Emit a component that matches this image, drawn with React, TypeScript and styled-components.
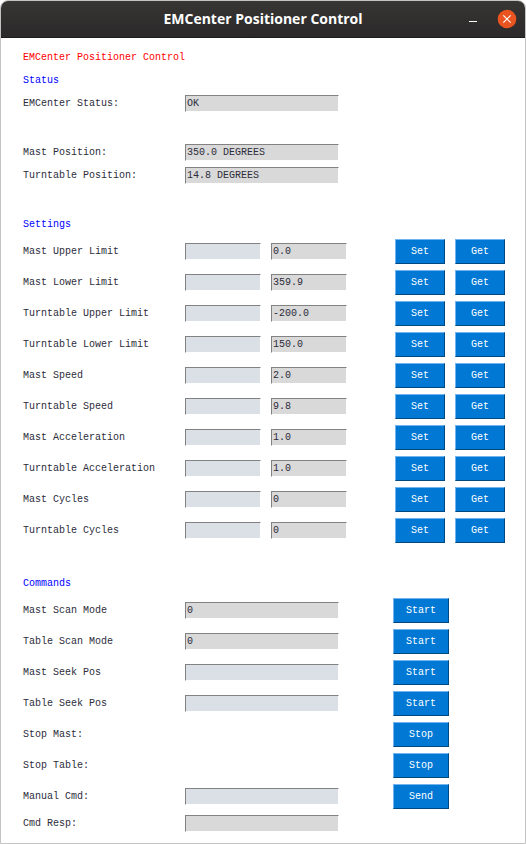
import React, { useId } from "react";
import styled, { createGlobalStyle } from "styled-components";

const GlobalStyle = createGlobalStyle`
  * { box-sizing: border-box; }
  body {
    margin: 0;
    background: #ffffff;
    font-family: "Liberation Mono", monospace;
    font-size: 10px;
    line-height: 13px;
    color: #2c2c3a;
  }
`;

const Window = styled.main`
  min-height: 100vh;
  border: 1px solid #c3c3c3;
  border-radius: 8px 8px 0 0;
  overflow: hidden;
  background: #ffffff;
`;

const TitleBar = styled.header`
  display: grid;
  grid-template-columns: 1fr auto 1fr;
  align-items: center;
  height: 37px;
  padding: 0 8px;
  background: linear-gradient(#373633, #2b292a);
  border-bottom: 1px solid #1d1c1c;
`;

const WindowTitle = styled.h1`
  grid-column: 2;
  margin: 0;
  font-family: "Open Sans", sans-serif;
  font-size: 14px;
  line-height: 20px;
  font-weight: 700;
  color: #ffffff;
`;

const WindowControls = styled.div`
  display: flex;
  justify-content: flex-end;
  gap: 14px;
`;

const WindowButton = styled.button<{ $close?: boolean }>`
  display: block;
  width: 20px;
  height: 20px;
  padding: 0;
  border: 0;
  border-radius: 50%;
  background: transparent;

  circle { fill: ${(p) => (p.$close ? "#e95420" : "none")}; }
`;

const Content = styled.div`
  padding: 8px 20px 8px 22px;
`;

const Section = styled.section<{ $spaced?: boolean }>`
  padding-bottom: ${(p) => (p.$spaced ? 26 : 0)}px;
`;

const Heading = styled.h2<{ $color: string }>`
  margin: 0;
  font-size: 10px;
  font-weight: 400;
  line-height: 23px;
  color: ${(p) => p.$color};
`;

const Row = styled.div<{ $tall?: boolean; $spaced?: boolean; $actions?: number }>`
  display: grid;
  grid-template-columns: 162px 1fr ${(p) => p.$actions ?? 110}px;
  align-items: center;
  height: ${(p) => (p.$tall ? 31 : 23)}px;
  margin-bottom: ${(p) => (p.$spaced ? 26 : 0)}px;
`;

const Label = styled.label`
  line-height: 13px;
`;

const Group = styled.div`
  display: flex;
  gap: 10px;
`;

const Field = styled.input<{ $wide?: boolean }>`
  width: ${(p) => (p.$wide ? 154 : 76)}px;
  height: 17px;
  padding: 0 1px;
  border: 1px solid;
  border-color: #828282 #ffffff #ffffff #828282;
  border-radius: 0;
  background: ${(p) => (p.readOnly ? "#d9d9d9" : "#dae0e6")};
  font: inherit;
  color: inherit;
  outline: none;
`;

const ActionButton = styled.button<{ $wide?: boolean }>`
  grid-column: ${(p) => (p.$wide ? "3" : "auto")};
  width: ${(p) => (p.$wide ? 56 : 50)}px;
  height: 25px;
  padding: 0;
  border: 1px solid;
  border-color: #72b4f0 #004880 #004880 #72b4f0;
  border-radius: 0;
  background: #0078d4;
  font: inherit;
  color: #ffffff;
`;

const settings = [
  ["Mast Upper Limit", "0.0"],
  ["Mast Lower Limit", "359.9"],
  ["Turntable Upper Limit", "-200.0"],
  ["Turntable Lower Limit", "150.0"],
  ["Mast Speed", "2.0"],
  ["Turntable Speed", "9.8"],
  ["Mast Acceleration", "1.0"],
  ["Turntable Acceleration", "1.0"],
  ["Mast Cycles", "0"],
  ["Turntable Cycles", "0"],
];

type Command = { label: string; action: string; value?: string; editable?: boolean };

const commands: Command[] = [
  { label: "Mast Scan Mode", action: "Start", value: "0" },
  { label: "Table Scan Mode", action: "Start", value: "0" },
  { label: "Mast Seek Pos", action: "Start", editable: true },
  { label: "Table Seek Pos", action: "Start", editable: true },
  { label: "Stop Mast:", action: "Stop" },
  { label: "Stop Table:", action: "Stop" },
  { label: "Manual Cmd:", action: "Send", editable: true },
];

function ReadoutRow({ label, value, spaced }: { label: string; value: string; spaced?: boolean }) {
  const id = useId();
  return (
    <Row $spaced={spaced}>
      <Label htmlFor={id}>{label}</Label>
      <Field id={id} $wide readOnly value={value} />
    </Row>
  );
}

function SettingRow({ label, value }: { label: string; value: string }) {
  const id = useId();
  return (
    <Row $tall>
      <Label htmlFor={id}>{label}</Label>
      <Group>
        <Field id={id} type="text" />
        <Field readOnly value={value} aria-label={`${label} current value`} />
      </Group>
      <Group>
        <ActionButton type="button">Set</ActionButton>
        <ActionButton type="button">Get</ActionButton>
      </Group>
    </Row>
  );
}

function CommandRow({ label, action, value, editable }: Command) {
  const id = useId();
  return (
    <Row $tall $actions={112}>
      <Label htmlFor={id}>{label}</Label>
      {editable && <Field id={id} $wide type="text" />}
      {value !== undefined && <Field id={id} $wide readOnly value={value} />}
      <ActionButton id={editable || value !== undefined ? undefined : id} $wide type="button">
        {action}
      </ActionButton>
    </Row>
  );
}

export default function App() {
  return (
    <>
      <GlobalStyle />
      <Window>
        <TitleBar>
          <WindowTitle>EMCenter Positioner Control</WindowTitle>
          <WindowControls>
            <WindowButton type="button" aria-label="Minimize">
              <svg width="20" height="20" viewBox="0 0 20 20">
                <path d="M6 12.5h8" stroke="#ffffff" />
              </svg>
            </WindowButton>
            <WindowButton type="button" aria-label="Close" $close>
              <svg width="20" height="20" viewBox="0 0 20 20">
                <circle cx="10" cy="10" r="9.3" />
                <path d="M6.3 6.3l7.4 7.4M13.7 6.3l-7.4 7.4" stroke="#ffffff" strokeWidth="1.2" />
              </svg>
            </WindowButton>
          </WindowControls>
        </TitleBar>
        <Content>
          <Heading $color="#ff0000">EMCenter Positioner Control</Heading>
          <Section $spaced>
            <Heading $color="#0000ff">Status</Heading>
            <ReadoutRow label="EMCenter Status:" value="OK" spaced />
            <ReadoutRow label="Mast Position:" value="350.0 DEGREES" />
            <ReadoutRow label="Turntable Position:" value="14.8 DEGREES" />
          </Section>
          <Section $spaced>
            <Heading $color="#0000ff">Settings</Heading>
            {settings.map(([label, value]) => (
              <SettingRow key={label} label={label} value={value} />
            ))}
          </Section>
          <Section>
            <Heading $color="#0000ff">Commands</Heading>
            {commands.map((command) => (
              <CommandRow key={command.label} {...command} />
            ))}
            <ReadoutRow label="Cmd Resp:" value="" />
          </Section>
        </Content>
      </Window>
    </>
  );
}
